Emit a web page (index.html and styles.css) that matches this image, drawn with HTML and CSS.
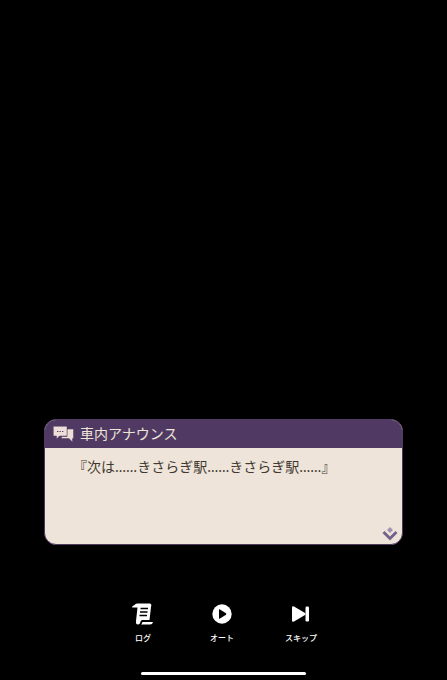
FILE: index.html
```html
<!DOCTYPE html>
<html lang="ja">
<head>
    <meta charset="UTF-8">
    <meta name="viewport" content="width=device-width, initial-scale=1.0">
    <title>車内アナウンス</title>
    <link rel="stylesheet" href="styles.css">
</head>
<body>
    <main class="scene">
        <section class="dialog">
            <header class="dialog-header">
                <svg class="icon-talk" viewBox="0 0 21 16" aria-hidden="true">
                    <path class="bubble" d="M14 3H20.500V12.500H19.500V16L16 12.500H8.500V10.500H14Z"/>
                    <path class="bubble" d="M0.300 0.300H14V10H6.500L3.500 13V10H0.300Z"/>
                    <path class="dots" d="M4 5.500H5.300M6.500 5.500H7.800M9 5.500H10.300"/>
                </svg>
                <h1 class="speaker">車内アナウンス</h1>
            </header>
            <div class="dialog-body">
                <p class="line">『次は……きさらぎ駅……きさらぎ駅……』</p>
                <svg class="icon-next" viewBox="0 0 16 14" aria-hidden="true">
                    <path class="diamond" d="M8 0L11 3L8 6L5 3Z"/>
                    <path class="chevron" d="M1.500 5L8 11.500L14.500 5"/>
                </svg>
            </div>
        </section>

        <nav class="controls">
            <button class="control" type="button">
                <svg class="icon" viewBox="0 0 22 22" aria-hidden="true">
                    <path class="solid" d="M0 4.500Q0 2.500 2.500 2Q3.500 0 6 0.500H18Q20 1 19 4L17.500 17H10Q9 17 8.500 18.500Q8 21.500 6 21.500Q3.500 21.500 4 18L5.500 4.500Z"/>
                    <path class="solid" d="M10.500 19H21Q20.500 21.500 18 21.500H9Q10 20.500 10.500 19Z"/>
                    <path class="lines" d="M8.500 5.500H16M8 9H15.500M7.500 12.500H15"/>
                </svg>
                <span>ログ</span>
            </button>
            <button class="control" type="button">
                <svg class="icon" viewBox="0 0 22 22" aria-hidden="true">
                    <circle class="solid" cx="11" cy="11" r="9.700"/>
                    <path class="hole" d="M8 6.500Q8 6 8.500 6.200L15 10.300Q15.700 11 15 11.700L8.500 15.800Q8 16 8 15.500Z"/>
                </svg>
                <span>オート</span>
            </button>
            <button class="control" type="button">
                <svg class="icon" viewBox="0 0 22 22" aria-hidden="true">
                    <path class="solid" d="M2 4.500Q2 2.500 4 3.500L15 10Q16 11 15 12L4 18.500Q2 19.500 2 17.500Z"/>
                    <rect class="solid" x="15.500" y="3.500" width="3.500" height="15" rx="1.200"/>
                </svg>
                <span>スキップ</span>
            </button>
        </nav>

        <div class="home-bar"></div>
    </main>
</body>
</html>
```

FILE: styles.css
```css
body {
    margin: 0;
    background-color: #000;
    font-family: "Noto Sans", "Noto Sans CJK JP", sans-serif;
}
.scene {
    display: flex;
    flex-direction: column;
    justify-content: flex-end;
    box-sizing: border-box;
    min-height: 100vh;
    padding: 0 44px 5px;
}
.dialog {
    border: 1px solid #503a63;
    border-radius: 12px;
    background-color: #eee4d9;
    overflow: hidden;
}
.dialog-header {
    display: flex;
    align-items: center;
    gap: 6px;
    height: 28px;
    padding: 0 8px;
    background-color: #503a63;
    color: #ede4d8;
}
.icon-talk {
    width: 21px;
    height: 16px;
}
.bubble {
    fill: #ede0d8;
    stroke: #503a63;
    stroke-width: 0.5;
}
.dots {
    stroke: #503a63;
    stroke-width: 1;
}
.speaker {
    margin: 0;
    font-size: 14px;
    font-weight: 400;
    line-height: 28px;
}
.dialog-body {
    display: flex;
    flex-direction: column;
    justify-content: space-between;
    box-sizing: border-box;
    min-height: 96px;
    padding: 8px 4px 3px 35px;
}
.line {
    margin: 0;
    color: #40382f;
    font-size: 14px;
    line-height: 22px;
    font-feature-settings: "halt";
}
.icon-next {
    align-self: flex-end;
    width: 16px;
    height: 14px;
}
.diamond {
    fill: #a193b3;
}
.chevron {
    fill: none;
    stroke: #75628b;
    stroke-width: 3;
}
.controls {
    display: flex;
    justify-content: center;
    margin: 58px 3px 28px 0;
}
.control {
    display: flex;
    flex-direction: column;
    align-items: center;
    gap: 7px;
    width: 79px;
    padding: 0;
    border: none;
    background: none;
    color: #fff;
    font-family: inherit;
    font-size: 8px;
    font-weight: 500;
    line-height: 12px;
    cursor: pointer;
}
.icon {
    width: 22px;
    height: 22px;
}
.solid {
    fill: #fff;
}
.hole {
    fill: #000;
}
.lines {
    stroke: #000;
    stroke-width: 1.5;
}
.home-bar {
    align-self: center;
    width: 46%;
    height: 3px;
    border-radius: 2px;
    background-color: #fff;
}
```
